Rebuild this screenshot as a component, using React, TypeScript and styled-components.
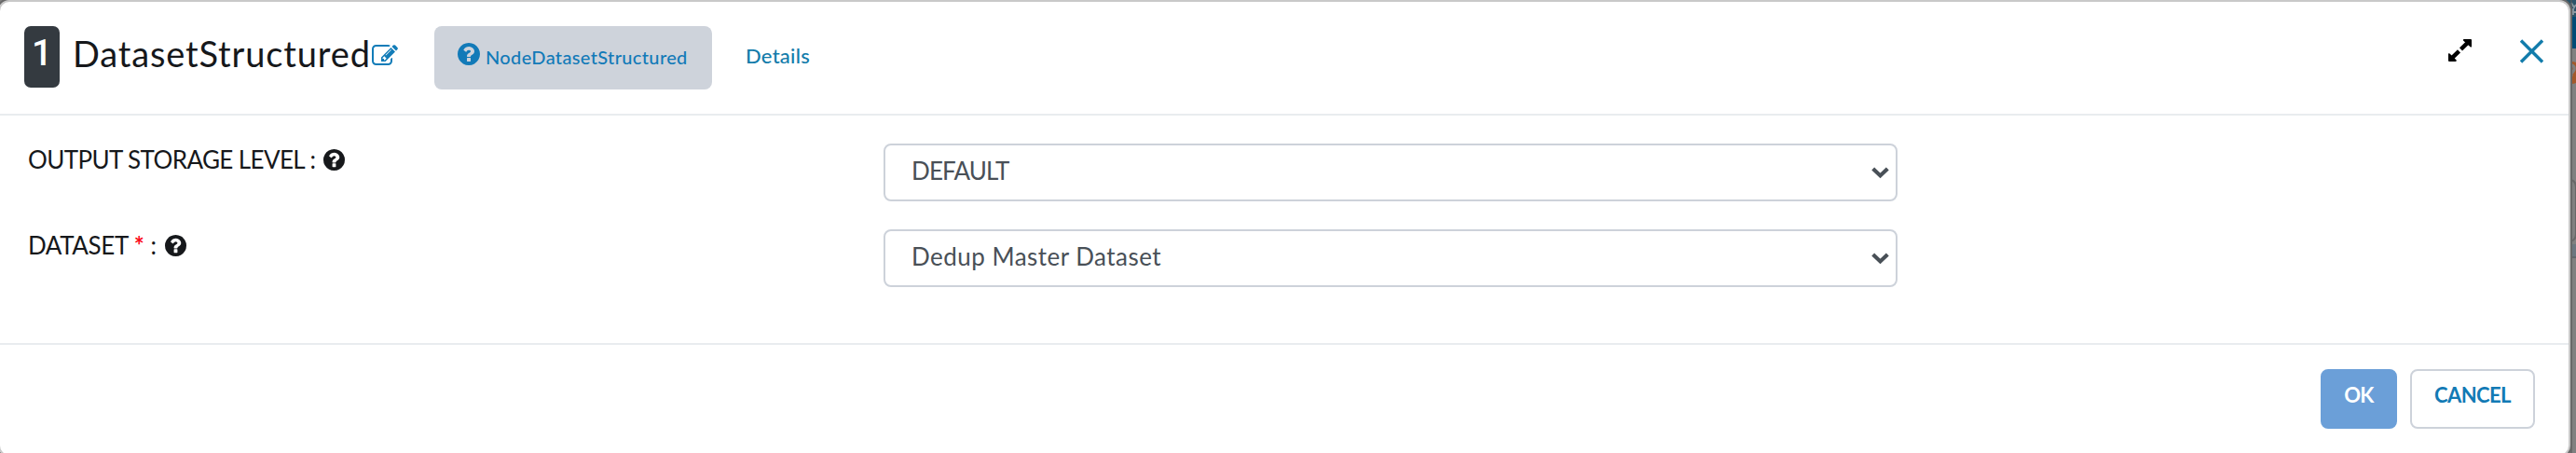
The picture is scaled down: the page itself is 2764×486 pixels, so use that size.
import React from "react";
import styled, { createGlobalStyle } from "styled-components";

const GlobalStyle = createGlobalStyle`
  *, *::before, *::after { box-sizing: border-box; }
  html, body { margin: 0; height: 486px; overflow: hidden; }
  body { font-family: Lato, "Open Sans", sans-serif; color: #16181b; background: #808080; }
`;

const Page = styled.main`
  display: flex;
  align-items: flex-start;
  width: 2764px;
  height: 486px;
  overflow: hidden;
  background: #808080;
`;

const Modal = styled.section`
  position: relative;
  z-index: 1;
  display: flex;
  flex-direction: column;
  flex: 0 0 2760px;
  height: 490px;
  margin-left: -2px;
  border: 2px solid #c9c9c9;
  border-radius: 12px;
  background: #fff;
  box-shadow: 0 0 0 2px #686868;
`;

const Header = styled.header`
  display: flex;
  align-items: flex-start;
  height: 122px;
  padding: 26px 27px 0 26px;
  border-bottom: 2px solid #e9ecef;
`;

const StepBadge = styled.span`
  width: 38px;
  height: 66px;
  border-radius: 7px;
  background: #343a40;
  color: #fff;
  font: 500 39px/59px Roboto, sans-serif;
  text-align: center;
`;

const Title = styled.h1`
  width: 321px;
  margin: 0 0 0 14px;
  font-size: 38px;
  font-weight: 400;
  line-height: 58px;
  letter-spacing: 0.85px;
  white-space: nowrap;
`;

const EditButton = styled.a`
  display: flex;
  margin-top: 18px;
  color: #127cb8;
`;

const Tab = styled.a<{ $active?: boolean }>`
  display: flex;
  align-items: flex-start;
  gap: 6px;
  height: 68px;
  border-radius: 8px;
  color: ${(p) => (p.$active ? "#127ab8" : "#127cab")};
  background: ${(p) => (p.$active ? "#ced3db" : "transparent")};
  width: ${(p) => (p.$active ? "298px" : "auto")};
  margin-left: ${(p) => (p.$active ? "39px" : "0")};
  padding: ${(p) => (p.$active ? "18px 25px 0" : "17px 36px 0")};
  font-size: ${(p) => (p.$active ? "20px" : "22px")};
  letter-spacing: ${(p) => (p.$active ? "0.35px" : "0.25px")};
  font-weight: 500;
  line-height: 30px;
  white-space: nowrap;
`;

const HeaderActions = styled.div`
  display: flex;
  align-items: flex-start;
  gap: 52px;
  margin-left: auto;
  padding-top: 14px;
`;

const IconButton = styled.a<{ $color: string }>`
  display: flex;
  color: ${(p) => p.$color};
`;

const Body = styled.div`
  display: flex;
  flex-direction: column;
  gap: 30px;
  height: 246px;
  padding: 30px 30px 0;
  border-bottom: 2px solid #e9ecef;
`;

const Row = styled.div`
  display: grid;
  grid-template-columns: 918px 1088px;
  height: 62px;
`;

const Label = styled.label<{ $spacing: string }>`
  display: flex;
  align-items: flex-start;
  margin-top: -1px;
  font-size: 26px;
  line-height: 36px;
  letter-spacing: ${(p) => p.$spacing};
  white-space: pre;

  svg { margin: 7px 0 0 9px; }
`;

const Required = styled.span`
  margin: 0 7px 0 6px;
  color: #fb0d1b;
  font-weight: 700;
`;

const Select = styled.div<{ $spacing: string }>`
  display: flex;
  justify-content: space-between;
  align-items: flex-start;
  padding: 9px 7px 0 28px;
  border: 2px solid #cdd2da;
  border-radius: 8px;
  color: #495057;
  font-size: 26px;
  line-height: 36px;
  letter-spacing: ${(p) => p.$spacing};

  svg { margin-top: 14px; }
`;

const Footer = styled.footer`
  display: flex;
  justify-content: flex-end;
  gap: 14px;
  padding: 26px 36px 0;
`;

const Button = styled.button<{ $primary?: boolean }>`
  width: ${(p) => (p.$primary ? "82px" : "134px")};
  height: 64px;
  padding: 0 0 8px;
  border: 2px solid ${(p) => (p.$primary ? "#6b9fd8" : "#cdd2da")};
  border-radius: 8px;
  background: ${(p) => (p.$primary ? "#6b9fd8" : "#fff")};
  color: ${(p) => (p.$primary ? "#fff" : "#127ab5")};
  font: 700 22px/30px Lato, sans-serif;
  letter-spacing: -0.6px;
`;

const Backdrop = styled.aside`
  flex: 0 0 20px;
  height: 486px;
  margin-left: -14px;
`;

const QuestionIcon = ({ size }: { size: number }) => (
  <svg width={size} height={size} viewBox="128 128 1536 1536" fill="currentColor">
    <path d="M1024 1376v-192q0-14-9-23t-23-9h-192q-14 0-23 9t-9 23v192q0 14 9 23t23 9h192q14 0 23-9t9-23zm256-672q0-88-55.5-163t-138.5-116-170-41q-243 0-371 213-15 24 8 42l132 100q7 6 19 6 16 0 25-12 53-68 86-92 34-24 86-24 48 0 85.5 26t37.5 59q0 38-20 61t-68 45q-63 28-115.5 86.5t-52.5 125.5v36q0 14 9 23t23 9h192q14 0 23-9t9-23q0-19 21.5-49.5t54.5-49.5q32-18 49-28.5t46-35 44.5-48 28-60.5 12.5-81zm384 192q0 209-103 385.5t-279.5 279.5-385.5 103-385.5-103-279.5-279.5-103-385.5 103-385.5 279.5-279.5 385.5-103 385.5 103 279.5 279.5 103 385.5z" />
  </svg>
);

const EditIcon = () => (
  <svg width="28" height="28" viewBox="0 0 1792 1792" fill="currentColor">
    <path d="M888 1184l116-116-152-152-116 116v56h96v96h56zm440-720q-16-16-33 1l-350 350q-17 17-1 33t33-1l350-350q17-17 1-33zm80 594v190q0 119-84.5 203.5t-203.5 84.5h-832q-119 0-203.5-84.5t-84.5-203.5v-832q0-119 84.5-203.5t203.5-84.5h832q63 0 117 25 15 7 18 23 3 17-9 29l-49 49q-14 14-32 8-23-6-45-6h-832q-66 0-113 47t-47 113v832q0 66 47 113t113 47h832q66 0 113-47t47-113v-126q0-13 9-22l64-64q15-15 35-7t20 29zm-96-738l288 288-672 672h-288v-288zm444 132l-92 92-288-288 92-92q28-28 68-28t68 28l152 152q28 28 28 68t-28 68z" />
  </svg>
);

const ExpandIcon = () => (
  <svg width="25" height="24" viewBox="0 0 25 24" fill="currentColor">
    <path d="M16.5 0H24q1 0 1 1v7.2q-.8.6-1.5 0L16 1.500q-.5-.9.5-1.500zM0 15.500q.8-.6 1.500 0L8.700 22.500q.4.900-.6 1.500H1q-1 0-1-1z" />
    <path d="M21.500 3.200L13.500 10.900M11.500 12.900L3.500 20.700" stroke="currentColor" strokeWidth="4.400" />
  </svg>
);

const CloseIcon = () => (
  <svg width="25" height="26" viewBox="0 0 25 26" stroke="currentColor" strokeWidth="3.400">
    <path d="M1 1.500L24 24.500M24 1.500L1 24.500" />
  </svg>
);

const ChevronIcon = () => (
  <svg width="19" height="13" viewBox="0 0 19 13" fill="none" stroke="currentColor" strokeWidth="4.200">
    <path d="M1.700 2L9.500 9.400L17.300 2" />
  </svg>
);

const BackdropArt = () => (
  <svg width="20" height="486" viewBox="0 0 20 486">
    <rect width="20" height="486" fill="#808080" />
    <rect width="20" height="18" fill="#2a5368" />
    <path d="M15 3L18 8L20 5M16 13H20M17 9V16" stroke="#8a98a0" strokeWidth="1.800" fill="none" />
    <rect y="18" width="20" height="34" fill="#004b75" />
    <circle cx="15" cy="78" r="12" fill="#a3592b" />
    <path d="M12 75Q12 70 15.500 70Q19 71 18 75Q17 77 15 79V82" stroke="#808080" strokeWidth="3" fill="none" />
    <path d="M0 193H14Q20 194 20 201V251Q20 258 13 259H0" stroke="#686868" strokeWidth="2" fill="none" />
    <rect y="262" width="20" height="13" fill="#6c7780" />
    <rect y="275" width="20" height="2" fill="#62686d" />
    <rect x="14" width="2" height="486" fill="#555" opacity=".55" />
  </svg>
);

export default function App() {
  return (
    <>
      <GlobalStyle />
      <Page>
        <Modal>
          <Header>
            <StepBadge>1</StepBadge>
            <Title>DatasetStructured</Title>
            <EditButton><EditIcon /></EditButton>
            <Tab $active><QuestionIcon size={24} />NodeDatasetStructured</Tab>
            <Tab>Details</Tab>
            <HeaderActions>
              <IconButton $color="#000"><ExpandIcon /></IconButton>
              <IconButton $color="#127cab"><CloseIcon /></IconButton>
            </HeaderActions>
          </Header>
          <Body>
            <Row>
              <Label $spacing="-0.6px">OUTPUT STORAGE LEVEL :<QuestionIcon size={23} /></Label>
              <Select $spacing="-0.85px">DEFAULT<ChevronIcon /></Select>
            </Row>
            <Row>
              <Label $spacing="-0.4px">DATASET<Required>*</Required>:<QuestionIcon size={23} /></Label>
              <Select $spacing="0.47px">Dedup Master Dataset<ChevronIcon /></Select>
            </Row>
          </Body>
          <Footer>
            <Button $primary>OK</Button>
            <Button>CANCEL</Button>
          </Footer>
        </Modal>
        <Backdrop><BackdropArt /></Backdrop>
      </Page>
    </>
  );
}
